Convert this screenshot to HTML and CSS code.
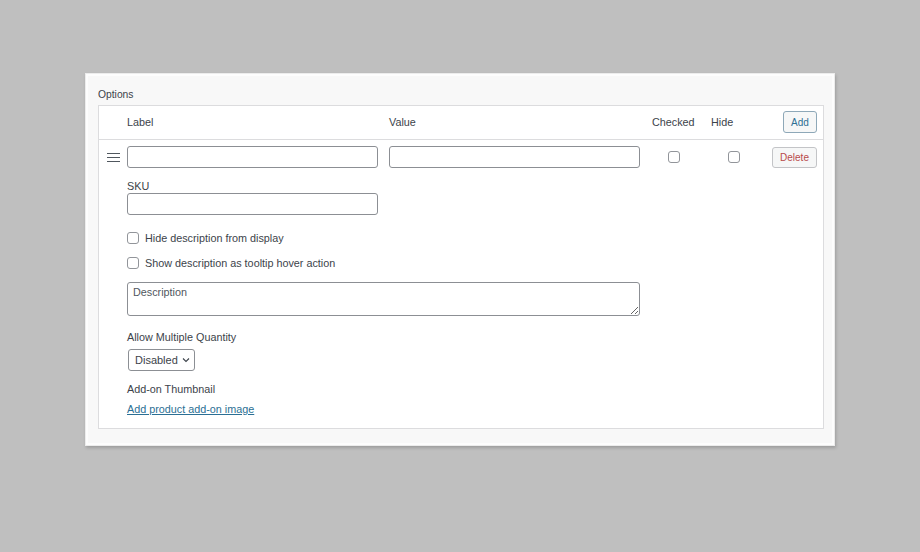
FILE: index.html
```html
<!DOCTYPE html>
<html>
<head>
<meta charset="utf-8">
<link rel="stylesheet" href="styles.css">
</head>
<body>
<div class="panel">
  <div class="panel-title">Options</div>
  <div class="box">
    <div class="head">
      <div></div>
      <div class="h-label">Label</div>
      <div class="h-label">Value</div>
      <div class="h-label">Checked</div>
      <div class="h-label">Hide</div>
      <div class="act"><button class="btn btn-add">Add</button></div>
    </div>
    <div class="row">
      <div class="handle"><span></span><span></span><span></span></div>
      <div class="cell"><input class="txt w250" type="text"></div>
      <div class="cell"><input class="txt w251" type="text"></div>
      <div class="cell chk-cell c1"><span class="cb"></span></div>
      <div class="cell chk-cell c2"><span class="cb"></span></div>
      <div class="act"><button class="btn btn-del">Delete</button></div>
    </div>
    <div class="details">
      <div class="lbl sku">SKU</div>
      <input class="txt w250" type="text">
      <div class="check-line first"><span class="cb"></span><span>Hide description from display</span></div>
      <div class="check-line"><span class="cb"></span><span>Show description as tooltip hover action</span></div>
      <textarea class="desc" placeholder="Description"></textarea>
      <div class="lbl mq">Allow Multiple Quantity</div>
      <div class="select">Disabled <svg width="8" height="6" viewBox="0 0 8 6"><path d="M1 1.5 L4 4.5 L7 1.5" fill="none" stroke="#3c434a" stroke-width="1.1"/></svg></div>
      <div class="lbl thumb">Add-on Thumbnail</div>
      <a class="link" href="#">Add product add-on image</a>
    </div>
  </div>
</div>
</body>
</html>
```
FILE: styles.css
```css
* { box-sizing: border-box; }
html, body { margin: 0; padding: 0; }
body {
  background: #bfbfbf;
  font-family: "Liberation Sans", Arial, sans-serif;
  font-size: 10.8px;
  color: #3c434a;
  width: 920px;
  height: 552px;
  overflow: hidden;
}
.panel {
  margin: 73px 0 0 85px;
  width: 750px;
  background: #f8f8f8;
  border: 1px solid #ececec;
  box-shadow: 1px 2px 3px rgba(0,0,0,0.18), inset 0 0 0 2px #fdfdfd;
  padding: 14px 10px 16px 12px;
}
.panel-title {
  line-height: 14px;
  height: 14px;
  margin-bottom: 3px;
  font-size: 10.3px;
}
.box {
  background: #fff;
  border: 1px solid #dcdcde;
  padding-bottom: 12px;
}
.head, .row {
  display: grid;
  grid-template-columns: 28px 262px 263px 59px 61px 1fr;
  align-items: center;
}
.head {
  height: 34px;
  border-bottom: 1px solid #dcdcde;
  padding-bottom: 1px;
}
.h-label { line-height: 14px; }
.act {
  display: flex;
  justify-content: flex-end;
  padding-right: 6px;
}
.btn {
  font-family: inherit;
  font-size: 10px;
  background: #f6f7f7;
  border-radius: 3px;
  padding: 0;
  height: 22px;
  cursor: pointer;
}
.btn-add {
  width: 34px;
  border: 1px solid #8ea8b8;
  color: #2d6f93;
}
.btn-del {
  width: 45px;
  height: 21px;
  border: 1px solid #c3c4c7;
  color: #b84a4a;
}
.row {
  padding-top: 6px;
  align-items: start;
}
.row .act { padding-top: 1px; }
.handle {
  display: flex;
  flex-direction: column;
  gap: 3px;
  padding: 7px 0 0 8px;
}
.handle span {
  display: block;
  width: 13px;
  height: 1px;
  background: #50575e;
}
.txt {
  display: block;
  height: 22px;
  border: 1px solid #8c8f94;
  border-radius: 3px;
  background: #fff;
  margin: 0;
  padding: 0 6px;
  font-family: inherit;
}
.w250 { width: 251px; }
.w251 { width: 251px; }
.chk-cell { height: 22px; display: flex; align-items: center; }
.c1 { padding-left: 16px; }
.c2 { padding-left: 17px; }
.cb {
  display: inline-block;
  width: 12px;
  height: 12px;
  border: 1px solid #92959a;
  border-radius: 3px;
  background: #fff;
  flex: none;
}
.details {
  padding-left: 28px;
}
.lbl {
  line-height: 14px;
  height: 14px;
}
.sku { margin-top: 11px; }
.check-line {
  display: flex;
  align-items: center;
  gap: 6px;
  height: 18px;
  margin-top: 7px;
}
.check-line.first { margin-top: 14px; }
.desc {
  display: block;
  width: 513px;
  height: 34px;
  margin-top: 10px;
  border: 1px solid #8c8f94;
  border-radius: 3px;
  font-family: inherit;
  font-size: 10.8px;
  padding: 3px 5px;
  color: #3c434a;
  resize: vertical;
}
.desc::placeholder { color: #50575e; }
.mq { margin-top: 14px; }
.select {
  margin-top: 5px;
  width: 67px;
  height: 22px;
  border: 1px solid #8c8f94;
  border-radius: 3px;
  display: flex;
  align-items: center;
  gap: 4px;
  padding-left: 6px;
  margin-left: 1px;
  font-size: 11px;
}
.thumb { margin-top: 11px; }
.link {
  display: block;
  margin-top: 6px;
  line-height: 14px;
  color: #2b6f94;
  text-decoration: underline;
  width: max-content;
}
```
